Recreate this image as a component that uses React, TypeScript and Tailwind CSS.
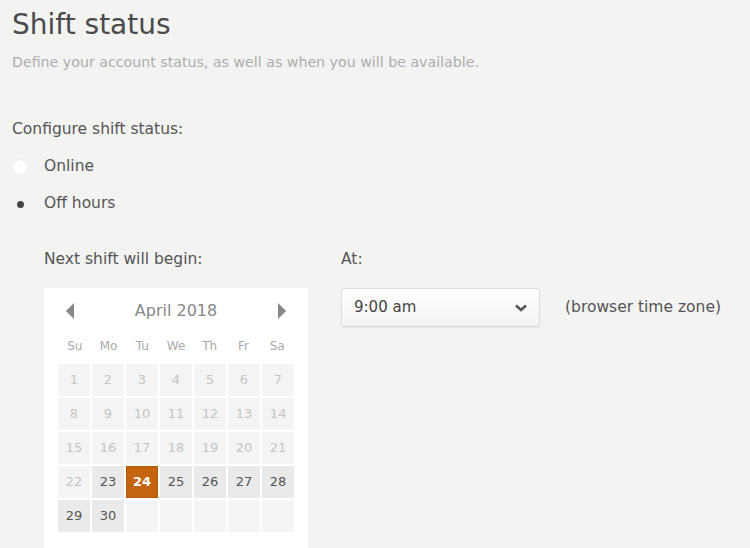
import React from "react";

const days: { d: number | null; state: "dis" | "en" | "sel" | "empty" }[] = [];
for (let i = 1; i <= 35; i++) {
  if (i > 30) days.push({ d: null, state: "empty" });
  else if (i < 23) days.push({ d: i, state: "dis" });
  else if (i === 24) days.push({ d: i, state: "sel" });
  else days.push({ d: i, state: "en" });
}

export default function App() {
  return (
    <div className="w-[750px] h-[548px] overflow-hidden bg-[#f3f3f2] text-[#555] font-['DejaVu_Sans',sans-serif]">
      <div className="px-[12px] pt-[6px]">
        <h1 className="text-[28px] leading-[38px] text-[#4a4a4a]">Shift status</h1>
        <p className="mt-[9px] text-[14.2px] leading-[18px] text-[#adadad]">
          Define your account status, as well as when you will be available.
        </p>
        <p className="mt-[48px] text-[15.5px] leading-[20px] text-[#555]">Configure shift status:</p>
        <div className="mt-[18px] flex items-center h-[20px]">
          <span className="w-[16px] h-[16px] rounded-full bg-white border border-[#eee]" />
          <span className="ml-[16px] text-[15.5px] text-[#555]">Online</span>
        </div>
        <div className="mt-[17px] flex items-center h-[20px]">
          <span className="w-[16px] h-[16px] rounded-full flex items-center justify-center">
            <span className="w-[7px] h-[7px] rounded-full bg-[#444]" />
          </span>
          <span className="ml-[16px] text-[15.5px] text-[#555]">Off hours</span>
        </div>
        <div className="mt-[35px] ml-[32px] flex">
          <div className="w-[297px]">
            <p className="text-[15.5px] leading-[20px] text-[#555]">Next shift will begin:</p>
            <div className="mt-[19px] w-[264px] bg-white pt-[11px] px-[14px] pb-[24px]">
              <div className="flex items-center justify-between px-[7px] h-[24px]">
                <svg width="10" height="16" viewBox="0 0 10 16"><path d="M9 0 L1 8 L9 16 Z" fill="#888" /></svg>
                <span className="text-[16px] text-[#888]">April 2018</span>
                <svg width="10" height="16" viewBox="0 0 10 16"><path d="M1 0 L9 8 L1 16 Z" fill="#888" /></svg>
              </div>
              <div className="grid grid-cols-7 mt-[13px] h-[20px] items-center text-center text-[12px] text-[#aaa]">
                {["Su", "Mo", "Tu", "We", "Th", "Fr", "Sa"].map((d) => (
                  <span key={d}>{d}</span>
                ))}
              </div>
              <div className="grid grid-cols-7 gap-[2px] mt-[8px]">
                {days.map((c, i) => (
                  <div
                    key={i}
                    className={
                      "h-[32px] flex items-center justify-center text-[13px] " +
                      (c.state === "dis"
                        ? "bg-[#f4f4f4] text-[#c4c4c4]"
                        : c.state === "en"
                        ? "bg-[#eaeaea] text-[#555]"
                        : c.state === "sel"
                        ? "bg-[#c5640f] text-white font-bold border border-[#b05a0c]"
                        : "bg-[#f5f5f5]")
                    }
                  >
                    {c.d}
                  </div>
                ))}
              </div>
            </div>
          </div>
          <div>
            <p className="text-[15.5px] leading-[20px] text-[#555]">At:</p>
            <div className="mt-[19px] flex items-center">
              <div className="w-[199px] h-[39px] rounded-[3px] border border-[#dcdcdc] bg-gradient-to-b from-white to-[#f3f3f3] flex items-center justify-between px-[12px] shadow-[0_1px_1px_rgba(0,0,0,0.05)]">
                <span className="text-[15px] text-[#444]">9:00 am</span>
                <svg width="12" height="8" viewBox="0 0 12 8"><path d="M1 1.5 L6 6 L11 1.5" stroke="#555" strokeWidth="2.6" fill="none" /></svg>
              </div>
              <span className="ml-[25px] text-[15.5px] text-[#555]">(browser time zone)</span>
            </div>
          </div>
        </div>
      </div>
    </div>
  );
}
